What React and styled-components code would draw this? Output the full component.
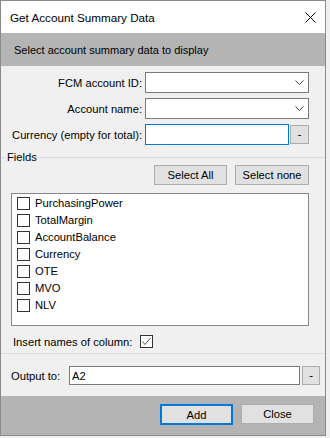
import React from 'react'
import styled, { createGlobalStyle } from 'styled-components'

const GlobalStyle = createGlobalStyle`
  body {
    margin: 0;
    background: #f0f0f0;
    font-family: "Liberation Sans", Arial, sans-serif;
    font-size: 11.2px;
    color: #000;
  }
  * { box-sizing: border-box; }
`

const Window = styled.div`
  width: 326px;
  height: 436px;
  border: 1px solid #8a8a8a;
  background: #f0f0f0;
  display: flex;
  flex-direction: column;
`

const TitleBar = styled.div`
  height: 32px;
  background: #fff;
  display: flex;
  align-items: center;
  justify-content: space-between;
  padding: 0 9px 0 9px;
  font-size: 11.7px;
`

const Header = styled.div`
  height: 33px;
  background: #b4b4b4;
  display: flex;
  align-items: center;
  padding-left: 13px;
  font-size: 11px;
`

const Body = styled.div`
  flex: 1;
  display: flex;
  flex-direction: column;
  padding-top: 6px;
`

const FormRows = styled.div`
  display: flex;
  flex-direction: column;
  gap: 5px;
  padding-right: 16px;
`

const Row = styled.div`
  display: flex;
  align-items: center;
  justify-content: flex-end;
  gap: 3px;
  height: 21px;
`

const Label = styled.span`
  white-space: nowrap;
`

const Combo = styled.div`
  width: 164px;
  height: 21px;
  background: #fff;
  border: 1px solid #7a7a7a;
  display: flex;
  align-items: center;
  justify-content: flex-end;
  padding-right: 4px;
`

const InputGroup = styled.div`
  width: 164px;
  display: flex;
  align-items: center;
  gap: 1px;
`

const TextBox = styled.div`
  flex: 1;
  height: ${p => p.$h || 21}px;
  background: #fff;
  border: 1px solid ${p => (p.$focused ? '#0078d7' : '#7a7a7a')};
  display: flex;
  align-items: center;
  padding-left: 2px;
`

const SmallButton = styled.div`
  width: ${p => p.$w || 19}px;
  height: ${p => p.$h || 19}px;
  background: #e1e1e1;
  border: 1px solid #adadad;
  display: flex;
  align-items: center;
  justify-content: center;
  padding-bottom: 2px;
`

const GroupHeader = styled.div`
  display: flex;
  align-items: center;
  margin-top: 6px;
  height: 12px;
  gap: 1px;
`

const GroupLine = styled.div`
  height: 1px;
  background: #dcdcdc;
  width: ${p => (p.$w ? `${p.$w}px` : 'auto')};
  flex: ${p => (p.$w ? 'none' : '1')};
`

const ButtonBar = styled.div`
  display: flex;
  justify-content: flex-end;
  gap: 8px;
  padding-right: 16px;
  margin-top: 2px;
`

const Button = styled.div`
  width: ${p => p.$w || 73}px;
  height: ${p => p.$h || 20}px;
  background: #e1e1e1;
  border: ${p => (p.$default ? '2px solid #0078d7' : '1px solid #adadad')};
  display: flex;
  align-items: center;
  justify-content: center;
`

const ListBox = styled.div`
  margin: 8px 16px 0 10px;
  height: 133px;
  background: #fff;
  border: 1px solid #828790;
  padding: 3px 0 0 5px;
  display: flex;
  flex-direction: column;
`

const ListItem = styled.div`
  height: 17px;
  display: flex;
  align-items: flex-start;
  gap: 5px;
`

const CheckBox = styled.div`
  width: 13px;
  height: 13px;
  border: 1px solid #333;
  background: #fff;
  flex: none;
  display: flex;
  align-items: center;
  justify-content: center;
`

const ItemText = styled.span`
  line-height: 13px;
`

const InsertRow = styled.div`
  display: flex;
  align-items: center;
  gap: 8px;
  padding-left: 12px;
  margin-top: 9px;
  height: 13px;
`

const Separator = styled.div`
  height: 1px;
  background: #dcdcdc;
  margin-top: 5px;
`

const OutputRow = styled.div`
  display: flex;
  align-items: center;
  padding: 0 5px 0 10px;
  margin-top: 12px;
  gap: 2px;
`

const OutputLabel = styled.span`
  width: 56px;
`

const Footer = styled.div`
  height: 39px;
  background: #b4b4b4;
  display: flex;
  justify-content: flex-end;
  align-items: flex-start;
  gap: 8px;
  padding: 8px 11px 0 0;
`

const Chevron = () => (
  <svg width="9" height="5" viewBox="0 0 9 5">
    <path d="M0.5 0.5 L4.5 4.5 L8.5 0.5" fill="none" stroke="#444" strokeWidth="1" />
  </svg>
)

const CloseIcon = () => (
  <svg width="11" height="11" viewBox="0 0 11 11">
    <path d="M0.5 0.5 L10.5 10.5 M10.5 0.5 L0.5 10.5" stroke="#000" strokeWidth="1" />
  </svg>
)

const Tick = () => (
  <svg width="11" height="11" viewBox="0 0 11 11">
    <path d="M1.5 5.5 L4 8.5 L9.5 2" fill="none" stroke="#555" strokeWidth="1" />
  </svg>
)

const fields = ['PurchasingPower', 'TotalMargin', 'AccountBalance', 'Currency', 'OTE', 'MVO', 'NLV']

export default function App() {
  return (
    <>
      <GlobalStyle />
      <Window>
        <TitleBar>
          <span>Get Account Summary Data</span>
          <CloseIcon />
        </TitleBar>
        <Header>Select account summary data to display</Header>
        <Body>
          <FormRows>
            <Row>
              <Label>FCM account ID:</Label>
              <Combo><Chevron /></Combo>
            </Row>
            <Row>
              <Label>Account name:</Label>
              <Combo><Chevron /></Combo>
            </Row>
            <Row>
              <Label>Currency (empty for total):</Label>
              <InputGroup>
                <TextBox $focused />
                <SmallButton>-</SmallButton>
              </InputGroup>
            </Row>
          </FormRows>
          <GroupHeader>
            <GroupLine $w={5} />
            <span>Fields</span>
            <GroupLine />
          </GroupHeader>
          <ButtonBar>
            <Button>Select All</Button>
            <Button $w={74}>Select none</Button>
          </ButtonBar>
          <ListBox>
            {fields.map(f => (
              <ListItem key={f}>
                <CheckBox />
                <ItemText>{f}</ItemText>
              </ListItem>
            ))}
          </ListBox>
          <InsertRow>
            <span>Insert names of column:</span>
            <CheckBox><Tick /></CheckBox>
          </InsertRow>
          <Separator />
          <OutputRow>
            <OutputLabel>Output to:</OutputLabel>
            <TextBox $h={19}>A2</TextBox>
            <SmallButton $w={18} $h={19}>-</SmallButton>
          </OutputRow>
        </Body>
        <Footer>
          <Button $default $h={21}>Add</Button>
          <Button $h={20}>Close</Button>
        </Footer>
      </Window>
    </>
  )
}
